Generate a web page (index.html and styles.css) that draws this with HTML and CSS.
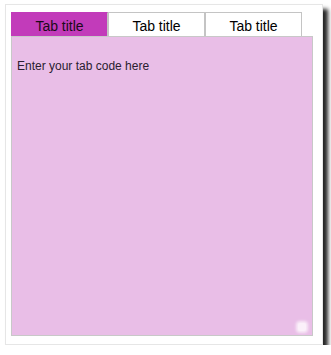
FILE: index.html
```html
<!DOCTYPE html>
<html>
<head>
<meta charset="utf-8">
<link rel="stylesheet" href="styles.css">
</head>
<body>
<div class="card">
  <div class="tabs">
    <div class="tab active">Tab title</div>
    <div class="tab">Tab title</div>
    <div class="tab">Tab title</div>
  </div>
  <div class="panel">
    <p class="panel-text">Enter your tab code here</p>
    <span class="grip"></span>
  </div>
</div>
</body>
</html>
```

FILE: styles.css
```css
html, body {
  margin: 0;
  padding: 0;
  background: #ffffff;
}
body {
  font-family: "Liberation Sans", Arial, sans-serif;
}
.card {
  box-sizing: border-box;
  margin: 4px 0 0 5px;
  width: 318px;
  height: 341px;
  background: #ffffff;
  border: 1px solid #e6e6e6;
  box-shadow: 5px 5px 4px rgba(0, 0, 0, 0.85);
  padding: 7px 5px 0 5px;
}
.tabs {
  display: flex;
}
.tab {
  box-sizing: border-box;
  width: 97px;
  height: 24px;
  border: 1px solid #c4c4c4;
  border-bottom: none;
  background: #ffffff;
  color: #000;
  font-size: 14px;
  line-height: 16px;
  padding-top: 5px;
  text-align: center;
}
.tab.active {
  background: #c23bba;
  border-color: #c23bba;
  border-right-color: #c4c4c4;
  color: #1a0a18;
}
.panel {
  position: relative;
  box-sizing: border-box;
  width: 302px;
  height: 300px;
  border: 1px solid #c8c8c8;
  background: #e9bee7;
  padding: 22px 5px 0 5px;
}
.panel-text {
  margin: 0;
  font-size: 12px;
  line-height: 15px;
  color: #2a2030;
}
.grip {
  position: absolute;
  right: 6px;
  bottom: 4px;
  width: 8px;
  height: 8px;
  background: #fbf0fa;
  border-radius: 2px;
  box-shadow: 0 0 3px 2px rgba(255, 255, 255, 0.7);
}
```
